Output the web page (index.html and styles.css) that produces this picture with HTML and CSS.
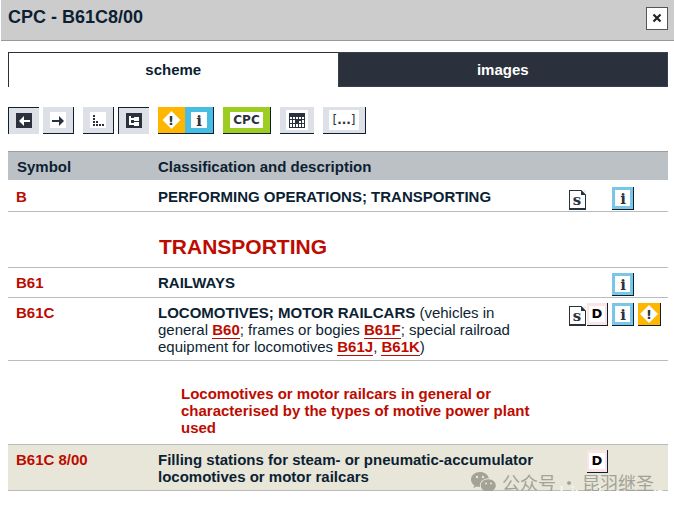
FILE: index.html
```html
<!DOCTYPE html>
<html lang="en">
<head>
    <meta charset="UTF-8">
    <meta name="viewport" content="width=device-width, initial-scale=1.0">
    <title>CPC - B61C8/00</title>
    <link rel="stylesheet" href="styles.css">
</head>
<body>
    <header>
        <h1>CPC - B61C8/00</h1>
        <button class="close" aria-label="Close">
            <svg width="10" height="11" viewBox="0 0 10 11"><path d="M1.500 1.500 L8.500 8.500 M8.500 1.500 L1.500 8.500" stroke="#222" stroke-width="2.200"/></svg>
        </button>
    </header>

    <main>
        <nav class="tabs">
            <a class="tab active" href="#scheme">scheme</a>
            <a class="tab" href="#images">images</a>
        </nav>

        <div class="toolbar">
            <div class="group">
                <button class="tool pressed" aria-label="Previous">
                    <svg width="16" height="16" viewBox="0 0 16 16">
                        <rect width="16" height="15" fill="#2b323d"/>
                        <path d="M3 8 L8 3 V13 Z" fill="#fff"/>
                        <rect x="7" y="7" width="7" height="2" fill="#fff"/>
                    </svg>
                </button>
                <button class="tool" aria-label="Next">
                    <svg width="16" height="16" viewBox="0 0 16 16">
                        <rect width="16" height="16" fill="#fff"/>
                        <path d="M14 9 L9 4 V14 Z" fill="#2b323d"/>
                        <rect x="2" y="8" width="8" height="2" fill="#2b323d"/>
                    </svg>
                </button>
            </div>
            <div class="group">
                <button class="tool" aria-label="Dots">
                    <svg width="16" height="16" viewBox="0 0 16 16">
                        <rect width="16" height="16" fill="#fff"/>
                        <path d="M3 3h2v2h-2z M3 6h2v2h-2z M3 9h2v2h-2z M6 9h2v2h-2z M3 12h2v2h-2z M6 12h2v2h-2z M9 12h2v2h-2z M12 12h2v2h-2z" fill="#2b323d"/>
                    </svg>
                </button>
                <button class="tool pressed" aria-label="Tree">
                    <svg width="16" height="16" viewBox="0 0 16 16">
                        <rect width="16" height="15" fill="#2b323d"/>
                        <path d="M3 3h2v2h3v-1h5v4h-5v-1h-3v3h3v-1h5v4h-5v-1h-5z" fill="#fff"/>
                    </svg>
                </button>
            </div>
            <div class="group joined">
                <button class="tool warning" aria-label="Warnings">
                    <svg width="19" height="18" viewBox="0 0 19 18">
                        <path d="M9.500 0 L18.500 9 L9.500 18 L0.500 9 Z" fill="#fff"/>
                        <text class="mark" x="9" y="14">!</text>
                    </svg>
                </button>
                <button class="tool notes" aria-label="Notes">
                    <svg width="16" height="16" viewBox="0 0 16 16">
                        <rect width="16" height="16" fill="#fff"/>
                        <text class="info-mark" x="8" y="14">i</text>
                    </svg>
                </button>
            </div>
            <button class="tool cpc"><span>CPC</span></button>
            <button class="tool date" aria-label="Dates">
                <svg width="22" height="20" viewBox="0 0 22 20">
                    <rect width="22" height="20" fill="#fff"/>
                    <rect x="3" y="3" width="16" height="15" fill="#2b323d"/>
                    <path d="M4 7h2v2h-2z M7 7h2v2h-2z M10 7h2v2h-2z M13 7h2v2h-2z M16 7h2v2h-2z M4 10h2v3h-2z M7 10h2v3h-2z M16 10h2v3h-2z M13 11h2v2h-2z M4 14h2v3h-2z M7 14h2v3h-2z M10 14h2v3h-2z M13 14h2v3h-2z M16 14h2v3h-2z" fill="#fff"/>
                </svg>
            </button>
            <button class="tool refs"><span>[<b>...</b>]</span></button>
        </div>

        <table>
            <thead>
                <tr>
                    <th class="symbol">Symbol</th>
                    <th class="text">Classification and description</th>
                    <th class="docs"></th>
                    <th class="info"></th>
                    <th class="warn"></th>
                </tr>
            </thead>
            <tbody>
                <tr class="section">
                    <td><a href="#B">B</a></td>
                    <td class="text"><b>PERFORMING OPERATIONS; TRANSPORTING</b></td>
                    <td class="icons"><div class="slots">
                        <button class="icon icon-s" aria-label="Statement"><svg width="17" height="20" viewBox="0 0 17 20"><path d="M0 0h12l5 5v15h-17z" fill="#26333d"/><path d="M1 1h11v4h4v13h-15z" fill="#fff"/><path d="M12 0l5 5h-5z" fill="#26333d"/><text class="s-mark" x="8" y="15">s</text></svg></button>
                    </div></td>
                    <td class="icons"><button class="icon icon-i" aria-label="Notes"><svg width="15" height="16" viewBox="0 0 15 16"><rect width="15" height="16" fill="#fff"/><text class="info-mark" x="8" y="14">i</text></svg></button></td>
                    <td class="icons"></td>
                </tr>
                <tr>
                    <td></td>
                    <td class="text" colspan="4"><h2>TRANSPORTING</h2></td>
                </tr>
                <tr>
                    <td><a href="#B61">B61</a></td>
                    <td class="text"><b>RAILWAYS</b></td>
                    <td class="icons"></td>
                    <td class="icons"><button class="icon icon-i" aria-label="Notes"><svg width="15" height="16" viewBox="0 0 15 16"><rect width="15" height="16" fill="#fff"/><text class="info-mark" x="8" y="14">i</text></svg></button></td>
                    <td class="icons"></td>
                </tr>
                <tr>
                    <td><a href="#B61C">B61C</a></td>
                    <td class="text"><b>LOCOMOTIVES; MOTOR RAILCARS</b> (vehicles in general <a class="ref" href="#B60">B60</a>; frames or bogies <a class="ref" href="#B61F">B61F</a>; special railroad equipment for locomotives <a class="ref" href="#B61J">B61J</a>, <a class="ref" href="#B61K">B61K</a>)</td>
                    <td class="icons"><div class="slots">
                        <button class="icon icon-s" aria-label="Statement"><svg width="17" height="20" viewBox="0 0 17 20"><path d="M0 0h12l5 5v15h-17z" fill="#26333d"/><path d="M1 1h11v4h4v13h-15z" fill="#fff"/><path d="M12 0l5 5h-5z" fill="#26333d"/><text class="s-mark" x="8" y="15">s</text></svg></button>
                        <button class="icon icon-d"><span>D</span></button>
                    </div></td>
                    <td class="icons"><button class="icon icon-i" aria-label="Notes"><svg width="15" height="16" viewBox="0 0 15 16"><rect width="15" height="16" fill="#fff"/><text class="info-mark" x="8" y="14">i</text></svg></button></td>
                    <td class="icons"><button class="icon icon-w" aria-label="Warning"><svg width="20" height="18" viewBox="0 0 20 18"><path d="M10 0 L19 9 L10 18 L1 9 Z" fill="#fff"/><text class="mark" x="10" y="14">!</text></svg></button></td>
                </tr>
                <tr>
                    <td></td>
                    <td class="text"><h3>Locomotives or motor railcars in general or characterised by the types of motive power plant used</h3></td>
                    <td colspan="3"></td>
                </tr>
                <tr class="selected">
                    <td><a href="#B61C8">B61C 8/00</a></td>
                    <td class="text"><b>Filling stations for steam- or pneumatic-accumulator locomotives or motor railcars</b></td>
                    <td class="icons"><div class="slots">
                        <button class="icon icon-d"><span>D</span></button>
                    </div></td>
                    <td class="icons"></td>
                    <td class="icons"></td>
                </tr>
            </tbody>
        </table>

        <div class="site-mark">Livchan.cn</div>
        <div class="watermark">
            <svg width="25" height="21" viewBox="0 0 25 21">
                <path d="M9 0C4 0 0 3.3 0 7.5c0 2.400 1.300 4.400 3.300 5.800L2.500 16l3-1.600c1.100.3 2.300.5 3.500.5-.9-5 3.400-8.800 8.900-8.600C17 2.600 13.400 0 9 0z"/>
                <path d="M17.300 7.200c-4.300 0-7.500 2.800-7.500 6.300s3.200 6.300 7.500 6.300c.9 0 1.800-.1 2.600-.4l2.600 1.400-.7-2.300c1.900-1.200 3-3 3-5 0-3.500-3.200-6.300-7.500-6.300z"/>
                <g fill="#e8e6d8"><circle cx="6" cy="5" r="1.200"/><circle cx="12" cy="5" r="1.200"/><circle cx="15" cy="11.500" r="1"/><circle cx="20" cy="11.500" r="1"/></g>
            </svg>
            <span>公众号 · 昆羽继圣</span>
        </div>
    </main>
</body>
</html>
```
FILE: styles.css
```css
body {
    margin: 0;
    background-color: white;
    color: #0c1f33;
    font-family: "Liberation Sans", Arial, sans-serif;
    font-size: 15px;
    line-height: 17px;
}
header {
    display: flex;
    justify-content: space-between;
    align-items: flex-start;
    box-sizing: border-box;
    height: 41px;
    margin-left: 1px;
    padding: 7px 6px 0 7px;
    background-color: #ccc;
    border-bottom: 1px solid #999;
}
h1 {
    margin: 0;
    font-size: 18px;
    line-height: 20px;
}
button {
    display: flex;
    align-items: center;
    justify-content: center;
    box-sizing: border-box;
    padding: 0;
    border: none;
    border-radius: 0;
    color: #2b323d;
    cursor: pointer;
}
svg {
    display: block;
    overflow: visible;
}
.close {
    width: 22px;
    height: 23px;
    background-color: white;
    border: 1px solid #555;
}
main {
    position: relative;
    padding: 11px 6px 0 8px;
}

/* tabs */
.tabs {
    display: flex;
}
.tab {
    flex: 1;
    box-sizing: border-box;
    height: 35px;
    padding-top: 8px;
    background-color: #2b313c;
    border: 1px solid #36414d;
    color: white;
    font-weight: bold;
    text-align: center;
    text-decoration: none;
}
.tab.active {
    background-color: white;
    border-color: #2b313c;
    border-bottom: none;
    border-right: none;
    color: #0c1f33;
}

/* toolbar */
.toolbar {
    display: flex;
    gap: 9px;
    margin: 20px 0 17px;
}
.group {
    display: flex;
    gap: 4px;
}
.group.joined {
    gap: 0;
}
.tool {
    width: 31px;
    height: 27px;
    background-color: #dde0e6;
    border-right: 1px solid #0c1f33;
    border-bottom: 1px solid #0c1f33;
}
.tool.pressed {
    border: none;
    border-left: 1px solid #0c1f33;
    border-top: 1px solid #0c1f33;
}
.tool.warning {
    width: 27px;
    background-color: #ffb600;
    border-right: none;
}
.tool.notes {
    width: 29px;
    background-color: #47bde3;
}
.tool.cpc {
    width: 48px;
    background-color: #9ccd20;
}
.tool.date {
    width: 34px;
    border-right: none;
}
.tool.refs {
    width: 43px;
}
.tool span {
    padding: 0 3px;
    background-color: white;
    font: bold 12px/16px "DejaVu Sans", sans-serif;
}
.tool.refs span {
    font-weight: normal;
    line-height: 20px;
}
.mark, .info-mark, .s-mark {
    fill: #2b323d;
    font-family: "DejaVu Sans", sans-serif;
    font-size: 13px;
    font-weight: bold;
    text-anchor: middle;
}
.info-mark, .s-mark {
    font-family: "DejaVu Serif", serif;
    font-size: 15px;
}

/* scheme table */
table {
    width: 100%;
    table-layout: fixed;
    border-collapse: separate;
    border-spacing: 0;
}
th {
    box-sizing: border-box;
    height: 29px;
    padding: 6px 0 5px 9px;
    background-color: #bbc1c5;
    border-top: 1px solid #999ea2;
    text-align: left;
    vertical-align: top;
}
.symbol {
    width: 142px;
}
.docs {
    width: 43px;
}
.info {
    width: 26px;
}
.warn {
    width: 30px;
}
td {
    padding: 6px 0 5px 8px;
    border-bottom: 1px solid #bbb;
    vertical-align: top;
}
.text {
    padding-left: 8px;
    padding-right: 28px;
}
td a {
    color: #bd0b00;
    font-weight: bold;
    text-decoration: none;
}
td .ref {
    border-bottom: 1px solid #bd0b00;
}
td.icons {
    padding: 5px 0 1px;
}
.section td {
    padding-top: 8px;
}
.section td.icons {
    padding-top: 7px;
}
h2 {
    margin: 19px 0 6px 1px;
    color: #bd0b00;
    font-size: 21px;
    line-height: 19px;
}
h3 {
    margin: 18px 0 3px 23px;
    color: #bd0b00;
    font-size: 15px;
    line-height: 17px;
}
.selected td {
    background-color: #e8e6d8;
}
.slots {
    display: grid;
    grid-template-columns: 18px 25px;
    grid-template-rows: 23px;
}
.icon {
    width: 22px;
    height: 23px;
    border-right: 1px solid #0c1f33;
    border-bottom: 1px solid #0c1f33;
}
.icon-s {
    grid-area: 1 / 1;
    align-self: end;
    width: 17px;
    height: 20px;
    border: none;
}
.icon-d {
    grid-area: 1 / 2;
    width: 21px;
    background-color: #fde4e4;
}
.icon-d span {
    width: 16px;
    background-color: white;
    color: black;
    font: bold 13px/16px "DejaVu Sans", sans-serif;
}
.icon-i {
    background-color: #7ac6e8;
}
.icon-w {
    width: 23px;
    background-color: #ffb600;
}

/* marks lying over the table */
.watermark {
    position: absolute;
    right: 20px;
    bottom: -2px;
    display: flex;
    align-items: center;
    gap: 6px;
    color: #a3a297;
    fill: #a3a297;
    font-family: "Noto Sans CJK SC", sans-serif;
    font-size: 18px;
    line-height: 21px;
}
.site-mark {
    position: absolute;
    right: 8px;
    bottom: -14px;
    color: #f9f5f6;
    font-family: "Open Sans", sans-serif;
    font-size: 22px;
    line-height: 24px;
}
```
